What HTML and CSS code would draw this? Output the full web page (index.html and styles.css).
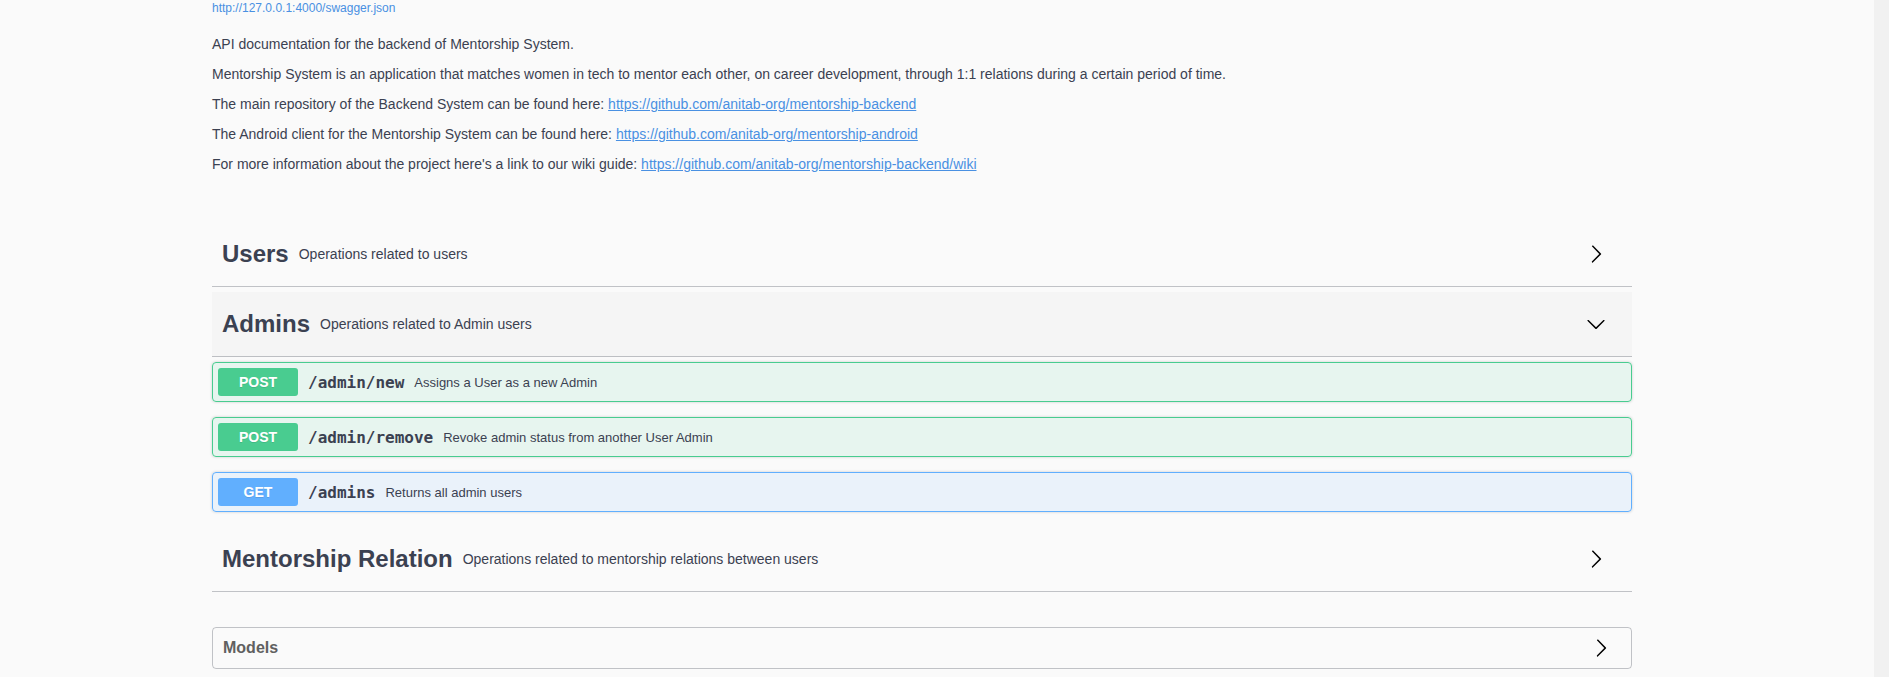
FILE: index.html
```html
<!DOCTYPE html>
<html lang="en">
<head>
    <meta charset="UTF-8">
    <meta name="viewport" content="width=device-width, initial-scale=1.0">
    <title>Swagger UI</title>

    <link rel="stylesheet" href="styles.css">
</head>
<body>

    <div class="page">
        <main class="wrapper">

            <section class="info">
                <a class="url" href="#">http://127.0.0.1:4000/swagger.json</a>
                <div class="description">
                    <p>API documentation for the backend of Mentorship System.</p>
                    <p>Mentorship System is an application that matches women in tech to mentor each other, on career development, through 1:1 relations during a certain period of time.</p>
                    <p>The main repository of the Backend System can be found here: <a href="#">https://github.com/anitab-org/mentorship-backend</a></p>
                    <p>The Android client for the Mentorship System can be found here: <a href="#">https://github.com/anitab-org/mentorship-android</a></p>
                    <p>For more information about the project here's a link to our wiki guide: <a href="#">https://github.com/anitab-org/mentorship-backend/wiki</a></p>
                </div>
            </section>

            <section class="tag-section">
                <h3 class="tag">
                    <span class="tag-name">Users</span>
                    <small>Operations related to users</small>
                    <button class="expand">
                        <svg width="20" height="20" viewBox="0 0 20 20"><path d="M13.25 10L6.109 2.58a.697.697 0 0 1 .979-.979l7.87 7.87a.697.697 0 0 1 0 .979l-7.87 7.87a.697.697 0 1 1-.979-.979L13.25 10z"/></svg>
                    </button>
                </h3>
            </section>

            <section class="tag-section">
                <h3 class="tag open">
                    <span class="tag-name">Admins</span>
                    <small>Operations related to Admin users</small>
                    <button class="expand">
                        <svg width="20" height="20" viewBox="0 0 20 20"><path d="M17.418 6.109c.272-.268.709-.268.979 0s.271.701 0 .969l-7.908 7.83c-.27.268-.707.268-.979 0l-7.908-7.83c-.27-.268-.27-.701 0-.969.271-.268.709-.268.979 0L10 13.25l7.418-7.141z"/></svg>
                    </button>
                </h3>
                <div class="operations">
                    <div class="opblock post">
                        <span class="method">POST</span>
                        <span class="path">/admin/new</span>
                        <span class="summary">Assigns a User as a new Admin</span>
                    </div>
                    <div class="opblock post">
                        <span class="method">POST</span>
                        <span class="path">/admin/remove</span>
                        <span class="summary">Revoke admin status from another User Admin</span>
                    </div>
                    <div class="opblock get">
                        <span class="method">GET</span>
                        <span class="path">/admins</span>
                        <span class="summary">Returns all admin users</span>
                    </div>
                </div>
            </section>

            <section class="tag-section">
                <h3 class="tag">
                    <span class="tag-name">Mentorship Relation</span>
                    <small>Operations related to mentorship relations between users</small>
                    <button class="expand">
                        <svg width="20" height="20" viewBox="0 0 20 20"><path d="M13.25 10L6.109 2.58a.697.697 0 0 1 .979-.979l7.87 7.87a.697.697 0 0 1 0 .979l-7.870 7.87a.697.697 0 1 1-.979-.979L13.25 10z"/></svg>
                    </button>
                </h3>
            </section>

            <section class="models">
                <h4>
                    <span>Models</span>
                    <svg width="20" height="20" viewBox="0 0 20 20"><path d="M13.25 10L6.109 2.58a.697.697 0 0 1 .979-.979l7.87 7.87a.697.697 0 0 1 0 .979l-7.87 7.87a.697.697 0 1 1-.979-.979L13.25 10z"/></svg>
                </h4>
            </section>

        </main>
        <div class="scrollbar"></div>
    </div>

</body>
</html>
```

FILE: styles.css
```css
html, body {
    overflow: hidden;
}

body {
    font-family: "Liberation Sans", Arial, sans-serif;
    margin: 0;
    padding: 0;
    background-color: #fafafa;
    color: #3b4151;
}

.page {
    display: flex;
    min-height: 100vh;
}

.wrapper {
    width: 1420px;
    margin-left: 212px;
    flex: none;
}

.scrollbar {
    margin-left: auto;
    width: 15px;
    flex: none;
    background-color: #f1f1f1;
}

/* info block */
.info {
    margin-bottom: 50px;
}

.url {
    display: block;
    font-size: 12px;
    line-height: 16px;
    color: #4990e2;
    text-decoration: none;
    margin-bottom: 20px;
}

.description p {
    font-size: 14px;
    line-height: 16px;
    margin: 0 0 14px;
}

.description p:last-child {
    margin-bottom: 0;
}

.description a {
    color: #4990e2;
}

/* tags */
.tag {
    display: flex;
    align-items: center;
    height: 64px;
    margin: 0 0 5px;
    padding: 0 20px 0 10px;
    border-bottom: 1px solid rgba(59, 65, 81, 0.3);
    font-size: 24px;
    font-weight: bold;
}

.tag.open {
    background-color: #f5f5f5;
}

.tag small {
    flex: 1;
    padding: 0 10px;
    font-size: 14px;
    font-weight: normal;
}

.expand {
    display: flex;
    padding: 0 6px;
    border: none;
    background: none;
}

.expand svg {
    fill: #000;
}

/* operations */
.opblock {
    display: flex;
    align-items: center;
    padding: 5px;
    margin: 0 0 15px;
    border: 1px solid;
    border-radius: 4px;
    box-shadow: 0 0 3px rgba(0, 0, 0, 0.19);
}

.opblock.post {
    border-color: #49cc90;
    background-color: rgba(73, 204, 144, 0.1);
}

.opblock.get {
    border-color: #61affe;
    background-color: rgba(97, 175, 254, 0.1);
}

.method {
    min-width: 80px;
    padding: 6px 0;
    font-size: 14px;
    line-height: 16px;
    font-weight: bold;
    text-align: center;
    color: #fff;
    border-radius: 3px;
    text-shadow: 0 1px 0 rgba(0, 0, 0, 0.1);
}

.post .method {
    background-color: #49cc90;
}

.get .method {
    background-color: #61affe;
}

.path {
    padding: 0 10px;
    font-family: "DejaVu Sans Mono", monospace;
    font-size: 16px;
    font-weight: bold;
}

.summary {
    font-size: 13px;
}

/* models */
.models {
    margin-top: 35px;
    border: 1px solid rgba(59, 65, 81, 0.3);
    border-radius: 4px;
}

.models h4 {
    display: flex;
    align-items: center;
    justify-content: space-between;
    margin: 0;
    padding: 10px 20px 10px 10px;
    font-size: 16px;
    line-height: 20px;
    color: #606060;
}

.models svg {
    fill: #000;
}
```
